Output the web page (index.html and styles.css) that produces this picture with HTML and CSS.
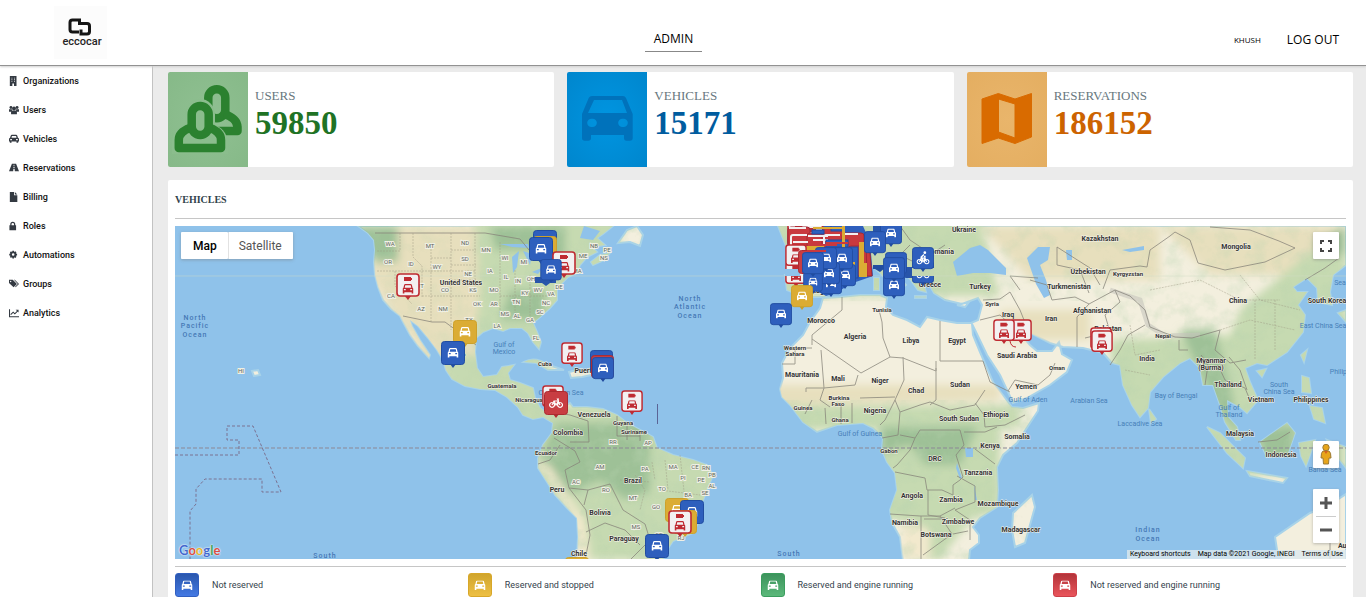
FILE: index.html
```html
<!DOCTYPE html>
<html lang="en">
<head>
<meta charset="utf-8">
<meta name="viewport" content="width=device-width, initial-scale=1">
<title>Eccocar Admin</title>
<link rel="stylesheet" href="styles.css">
</head>
<body>
<header class="topbar">
  <div class="brand">
    <svg class="brand-mark" viewBox="0 0 53 53" role="img" aria-label="eccocar">
      <path d="M25 26H18.500Q16 26 16 23.500V16.500Q16 14 18.500 14H25.500V17.500H33Q35.500 17.500 35.500 20V25.500Q35.500 28 33 28H27V23.500" fill="none" stroke="#151515" stroke-width="3"/>
      <text x="28" y="39" text-anchor="middle" class="brand-word">eccocar</text>
    </svg>
  </div>
  <a class="tab" href="#admin">ADMIN</a>
  <div class="account">
    <a class="user" href="#profile">KHUSH</a>
    <a class="logout" href="#logout">LOG OUT</a>
  </div>
</header>

<div class="shell">
<nav class="sidebar">
  <a href="#organizations"><svg viewBox="0 0 12 12"><path fill-rule="evenodd" d="M1 0H9V12H6V9H4V12H1ZM3 2V3H4V2ZM6 2V3H7V2ZM3 4V5H4V4ZM6 4V5H7V4ZM3 6V7H4V6ZM6 6V7H7V6Z"/></svg>Organizations</a>
  <a href="#users"><svg viewBox="0 0 12 12"><circle cx="2.3" cy="3" r="1.7"/><circle cx="9.7" cy="3" r="1.7"/><circle cx="6" cy="4.2" r="2.4"/><path d="M0 5H3.5V8H0ZM8.500 5H12V8H8.500ZM2.500 11Q2 6.500 4.500 6.500H7.500Q10 6.500 9.500 11Z"/></svg>Users</a>
  <a href="#vehicles"><svg viewBox="0 0 12 12"><path fill-rule="evenodd" d="M3.500 1H8.500Q9.500 1 10 2L10.700 4.500Q12 5 12 6V9H11V10.500H9V9H3V10.500H1V9H0V6Q0 5 1.300 4.500L2 2Q2.500 1 3.500 1ZM3.500 2.500L3 4.500H9L8.500 2.500ZM1.500 6V7.500H3.500V6ZM8.500 6V7.500H10.500V6Z"/></svg>Vehicles</a>
  <a href="#reservations"><svg viewBox="0 0 12 12"><path fill-rule="evenodd" d="M3.500 1H8.500L12 10H7L6.700 7H5.300L5 10H0ZM5.600 2L5.500 3.500H6.500L6.400 2ZM5.400 4.500L5.300 6H6.700L6.600 4.500Z"/></svg>Reservations</a>
  <a href="#billing"><svg viewBox="0 0 12 12"><path d="M1 0H6V4H10V12H1ZM7 0L10 3H7Z"/></svg>Billing</a>
  <a href="#roles"><svg viewBox="0 0 12 12"><path fill-rule="evenodd" d="M0.500 5H1.500V4Q1.500 1 4.500 1T7.500 4V5H8.500V11H0.500ZM3 5H6V4Q6 2.500 4.500 2.500T3 4Z"/></svg>Roles</a>
  <a href="#automations"><svg viewBox="0 0 12 12"><circle cx="5" cy="5.500" r="2.700" fill="none" stroke="#343a42" stroke-width="2.300"/><path d="M5 0.800V2.500M5 8.500V10.200M0.300 5.500H2M8 5.500H9.700M1.700 2.200L3 3.500M7 7.500L8.300 8.800M8.300 2.200L7 3.500M3 7.500L1.700 8.800" stroke="#343a42" stroke-width="2"/></svg>Automations</a>
  <a href="#groups"><svg viewBox="0 0 12 12"><path fill-rule="evenodd" d="M0 1H4.500L9.500 6L5.500 10L0 4.800ZM2 2.200A.8.8 0 1 0 2 3.800A.8.8 0 1 0 2 2.200ZM6 1H7L12 6L8 10L7.300 9.300L10.600 6Z"/></svg>Groups</a>
  <a href="#analytics"><svg viewBox="0 0 12 12"><path d="M.6 1.500V10.400H12M2 8L5 5L7 7L10.500 3.500" fill="none" stroke="#343a42" stroke-width="1.300"/><path d="M8 2H11.500V5.500Z"/></svg>Analytics</a>
</nav>

<main class="content">
  <section class="stats">
    <article class="stat users">
      <svg class="stat-icon" viewBox="0 0 80 95" aria-hidden="true">
        <g fill="none" stroke="#2b812f" stroke-width="8.500" stroke-linejoin="round">
          <rect x="40.300" y="17.300" width="17" height="29" rx="8.400"/>
          <path d="M49 59H69.500V55Q69 46 56 42"/>
        </g>
        <rect x="17" y="27" width="30" height="42" rx="15" fill="#8bbd8d"/>
        <path d="M4 82V69Q6 56 20 52H44Q58 56 59.500 69V82Z" fill="#8bbd8d"/>
        <g fill="none" stroke="#2b812f" stroke-width="8.500" stroke-linejoin="round">
          <path d="M22 56Q10.800 60 10.800 68V76H53V68Q53 60 42 56"/>
          <rect x="23.700" y="34" width="17" height="29" rx="8.400" fill="#8bbd8d"/>
        </g>
      </svg>
      <div class="stat-text"><h2>USERS</h2><strong>59850</strong></div>
    </article>
    <article class="stat vehicles">
      <svg class="stat-icon" viewBox="0 0 80 95" aria-hidden="true">
        <path fill="#0072bb" fill-rule="evenodd" d="M25 24H56Q58 24 59 26L65.700 42V66Q65.700 68.700 63 68.700H59.500Q57 68.700 57 66V63H24V66Q24 68.700 21.300 68.700H17.700Q15 68.700 15 66V42L21.700 26Q22.700 24 25 24ZM27 28L21 41H60L55 28ZM25 46.700A4.200 4.200 0 1 0 25 55A4.200 4.200 0 1 0 25 46.700ZM56 46.700A4.200 4.200 0 1 0 56 55A4.200 4.200 0 1 0 56 46.700Z"/>
      </svg>
      <div class="stat-text"><h2>VEHICLES</h2><strong>15171</strong></div>
    </article>
    <article class="stat reservations">
      <svg class="stat-icon" viewBox="0 0 80 95" aria-hidden="true">
        <path fill="#d96b00" fill-rule="evenodd" stroke="#d96b00" stroke-linejoin="round" d="M15 27L31.300 21.500L48 27L64.500 21.500V65L48 71.500L31.300 66L15 71.500ZM31.500 27V60L48 66V32Z"/>
      </svg>
      <div class="stat-text"><h2>RESERVATIONS</h2><strong>186152</strong></div>
    </article>
  </section>

  <section class="panel">
    <h1>VEHICLES</h1>
    <div class="map">
      <svg class="world" viewBox="175 226 1171 333" preserveAspectRatio="xMidYMid slice" role="img" aria-label="Vehicle map">
        <defs>
          <symbol id="car" viewBox="0 0 12 11"><path fill-rule="evenodd" d="M3 0H9Q10 0 10.300 1L11 4Q12 4.500 12 5.500V10.500H10V9H2V10.500H0V5.500Q0 4.500 1 4L1.700 1Q2 0 3 0ZM3 1.300L2.400 4H9.600L9 1.300ZM1.500 5.500V7H3.500V5.500ZM8.500 5.500V7H10.500V5.500Z"/></symbol>
          <symbol id="bike" viewBox="0 0 14 11"><path d="M3 5.500A2.400 2.400 0 1 0 3.100 5.500M11 5.500A2.400 2.400 0 1 0 11.100 5.500M3 8L5 4H9L11 8M5 4L7 8L9.500 4L8.500 2H10" fill="none" stroke="#fff" stroke-width="1.200"/></symbol>
          <symbol id="blue" viewBox="0 0 24 27"><path d="M9 23H15L12 27Z" fill="#214da1"/><rect x=".5" y=".5" width="23" height="23" rx="3" fill="#2e5fbd" stroke="#214da1"/><use href="#car" x="6.500" y="7" width="11" height="10" fill="#fff"/></symbol>
          <symbol id="yellow" viewBox="0 0 24 27"><path d="M9 23H15L12 27Z" fill="#c9a02b"/><rect x=".5" y=".5" width="23" height="23" rx="3" fill="#dbac34" stroke="#cda12b"/><use href="#car" x="6.500" y="7" width="11" height="10" fill="#fff"/></symbol>
          <symbol id="red" viewBox="0 0 24 27"><path d="M9 23H15L12 27Z" fill="#b12b30"/><rect x=".5" y=".5" width="23" height="23" rx="3" fill="#c83d42" stroke="#ac2b31"/><use href="#bike" x="5" y="6" width="14" height="11"/></symbol>
          <symbol id="cyclist" viewBox="0 0 24 27"><path d="M9 23H15L12 27Z" fill="#214da1"/><rect x=".5" y=".5" width="23" height="23" rx="3" fill="#2e5fbd" stroke="#214da1"/><use href="#bike" x="4" y="8" width="16" height="11"/><circle cx="14" cy="6" r="1.500" fill="#fff"/><path d="M13 8L10 11L12 14" fill="none" stroke="#fff" stroke-width="1.500"/></symbol>
          <symbol id="low" viewBox="0 0 24 27"><path d="M9 23H15L12 27Z" fill="#bf2b32"/><rect x="1" y="1" width="22" height="22" rx="3" fill="#f3f0f1" stroke="#bf2b32" stroke-width="1.600"/><path d="M8 4H15V5H16V7H15V8H8Z" fill="#bf2b32"/><use href="#car" x="6.500" y="11" width="11" height="10" fill="#bf2b32"/></symbol>
          <filter id="soft" x="-20%" y="-20%" width="140%" height="140%"><feGaussianBlur stdDeviation="4"/></filter>
          <filter id="terrain" x="0" y="0" width="100%" height="100%"><feTurbulence type="fractalNoise" baseFrequency=".06" numOctaves="4" seed="8"/><feColorMatrix values="0 0 0 0 .48  0 0 0 0 .65  0 0 0 0 .43  1.800 0 0 0 -.78"/></filter>
          <path id="land" d="M358 226L368 233L374 240L375 250L374 262L375 275L378 287L383 300L391 309L400 316L403 322L410 335L418 346L429 358L430 355L420 340L412 326L410 320L418 326L428 338L437 350L443 360L446 370L452 379L465 386L480 389L495 390L507 397L518 407L523 415L533 419L543 417L553 423L552 433L543 445L538 458L538 468L547 482L555 495L567 508L577 518L578 537L577 560H663L667 550L673 541L693 533L698 523L702 503L707 490L713 475L707 465L693 460L673 455L657 448L653 437L640 430L627 423L617 415L603 409L587 407L573 407L570 403L560 408L554 413L547 413L540 408L535 398L533 388L520 383L510 380L508 373L514 365L502 367L497 375L483 377L477 368L475 352L476 338L483 332L493 328L503 331L510 328L522 328L528 333L533 342L539 349L541 342L537 332L533 323L540 317L550 308L557 300L557 290L562 283L568 277L577 273L580 265L587 257L597 252L592 247L605 245L597 238L603 234L613 226Z
            M591 262L600 255L610 253L602 261L593 265ZM618 243L627 230L637 226L643 235L640 246L630 242ZM524 362Q535 356 549 365L564 370L548 370L536 363ZM569 372L581 369L596 374L582 377L571 378Z
            M778 226H1346V265L1333 275L1330 292L1332 305L1318 302L1317 288L1307 278L1293 287L1297 292L1307 292L1298 305L1305 315L1303 332L1287 352L1267 365L1257 363L1245 368L1250 382L1258 400L1247 413L1240 407L1227 400L1228 417L1237 427L1240 440L1236 440L1225 422L1220 405L1213 385L1203 385L1200 368L1190 358L1180 363L1163 377L1150 392L1148 408L1140 417L1132 405L1123 385L1120 365L1112 363L1103 353L1083 348L1063 347L1050 343L1032 334L1020 324L1018 331L1030 345L1037 351L1052 351L1059 342L1062 354L1072 360L1067 372L1050 385L1027 398L1013 403L1008 392L1000 375L987 355L975 330L972 324L973 335L980 352L987 368L993 382L1003 395L1012 407L1023 408L1039 403L1038 411L1030 423L1017 443L1003 455L997 467L998 490L997 507L980 518L973 527L979 535L979 543L970 550L969 560H903L900 537L892 523L890 510L897 490L895 473L887 462L882 450L883 438L873 428L863 423L837 425L817 432L803 422L790 405L782 397L780 389L783 378L782 363L790 348L803 335L810 322L820 308L823 298L840 297L860 295L880 295L887 298L886 307L893 315L907 320L920 327L927 317L940 320L957 323L971 323L978 320L982 305L978 298L962 304L945 300L934 293L930 286L924 285L926 292L918 290L910 279L895 264L888 261L899 278L906 285L898 291L892 285L880 273L873 267L860 271L846 280L835 289L825 297L804 297L787 290L785 275L812 274L805 251L786 246Z
            M1032 495L1035 507L1025 543L1015 547L1012 530L1013 513ZM1149 409L1156 419L1151 423ZM1207 427L1220 433L1245 458L1243 468L1227 453ZM1247 471L1287 478L1283 483L1250 476ZM1260 442L1287 423L1295 433L1288 453L1267 457ZM1302 376L1309 378L1311 393L1302 392ZM1310 406L1322 408L1325 423L1314 419ZM1301 355L1307 350L1304 362ZM1257 371L1266 369L1262 377ZM1338 313L1346 310V322ZM1299 443L1315 440L1310 455L1306 466L1301 456ZM1327 440L1346 447V468L1335 454ZM1283 560L1277 550L1275 537L1310 513L1326 507L1346 494V560Z
            M252 371L258 370L260 375L254 376ZM874 278H879V290H874ZM915 296H926V298H915ZM957 305L969 302L965 307Z"/>
          <clipPath id="landClip"><use href="#land"/></clipPath>
        </defs>
        <rect x="0" y="0" width="1600" height="800" fill="#8fc2ea"/>
        <use href="#land" fill="#f3efde" stroke="#a8d3e9" stroke-width="2"/>
        <g clip-path="url(#landClip)">
          <g filter="url(#soft)">
            <path fill="#e7dfbd" d="M375 226H490V380H440L370 280ZM775 385L1000 385V400L770 405ZM980 226H1160V280L1030 280ZM1000 310H1090V340H1000ZM1160 226H1346V275H1210Z"/>
            <path fill="#c6dab1" d="M475 220H620V350H474L480 290ZM440 355H550V430H460ZM535 405H720V560H585L560 500H535ZM780 405H1020V428H1000V510L970 520L940 560H910L900 520H880V430H790ZM775 220H980L1000 296H780ZM1110 340L1230 335L1240 310L1300 260L1346 230V475H1120Z"/>
            <path fill="#9ec197" d="M355 226H398V262H375ZM490 226H565V280L540 250H495ZM510 290H545V320H500ZM555 423H650V492L625 500L600 480L570 495L540 460ZM880 427L978 426L960 465L925 465L910 445L880 455ZM1180 330L1215 330L1230 385L1240 440L1210 395ZM1258 425H1295V460H1260ZM1310 245L1346 226V256Z"/>
            <path fill="#f2e9cd" d="M535 460L549 465L585 520L590 560H577L570 510ZM903 520L930 530V560H900Z"/>
          </g>
          <rect x="355" y="226" width="125" height="160" filter="url(#terrain)" opacity=".25"/>
          <rect x="480" y="226" width="295" height="333" filter="url(#terrain)" opacity=".55"/>
          <rect x="775" y="226" width="571" height="75" filter="url(#terrain)" opacity=".4"/>
          <rect x="775" y="400" width="300" height="160" filter="url(#terrain)" opacity=".5"/>
          <rect x="1110" y="301" width="236" height="190" filter="url(#terrain)" opacity=".5"/>
          <path d="M1110 290L1140 300L1148 325L1165 336L1200 335" stroke="#c7c4bd" stroke-width="5" fill="none" opacity=".6"/>
        </g>
        <g fill="#8fc2ea">
          <path d="M953 262L970 248L980 245L988 250L1006 268L1006 275L990 273L973 273L957 276ZM1027 258L1038 247L1050 247L1048 260L1040 265L1046 280L1050 295L1044 298L1036 284ZM512 257L519 251L517 267L513 273ZM500 244L528 244L529 248L512 247ZM523 251L532 254L530 265ZM550 262L561 258L556 264ZM532 272L544 267L538 274ZM965 448H973V457H966ZM957 463L962 478L960 479L956 468ZM974 484L977 500L975 500ZM1122 250L1144 246L1144 250L1130 252ZM1066 250H1072V260H1067ZM584 226L600 231L593 240L580 238Z"/>
        </g>
        <g class="borders">
          <path d="M375 233H485L520 239L529 250M403 316L432 322L445 322L460 333L476 345M552 412L570 415L588 421L589 442L570 442M554 438L575 451L580 462L565 470L569 488L588 490L610 484L623 510L645 524L650 540L630 560M538 464L550 460L560 445M569 488L586 510L590 535L585 560M588 490L584 505M586 532L605 523L625 530L640 545M617 416V436L640 436M627 425V440M640 431V441"/>
          <path d="M812 339L861 373L890 357L883 338L882 322L879 310M842 297V310L812 335V345M782 364H795V348H812M821 350L824 388H806V392M858 375L855 385L824 388L820 400L830 407M890 357L903 358L936 371V368M940 321V361H983M936 361V400L930 405M903 357L904 380L895 400L900 412L920 405L930 402L950 410L975 405L985 390M812 400L805 414M825 408L826 424M841 406V424M852 403V423M860 398L895 397M895 400L885 420L880 425M900 412L898 435L882 438M900 435L915 438L910 450L897 465L893 468M915 438L920 430L960 430L964 445L956 455L963 477L960 480L953 485V495L942 490H927L925 478L895 472M964 432H985L997 427M975 449L995 464M957 476L975 486L975 502L955 510L970 520V540M890 514L920 516H940L955 508M928 490V515L945 518M921 516V560M924 519H945M940 516L952 534L923 555M953 534L968 531M975 403L984 415L985 427L1005 425L1025 415M983 361L990 382L1010 392"/>
          <path d="M983 300L1000 299L1010 292L1020 310L1030 335M980 320L1000 315L1018 332M1008 391L1015 380L1038 385M1038 385L1050 375L1055 363M1030 280L1047 285L1052 300L1075 297L1089 304L1077 317V347M1089 304L1115 290L1120 302L1105 315L1110 332L1085 338M1057 265V247L1090 268L1100 285M1057 265L1080 270L1089 293M1103 289L1110 270L1140 266L1147 267L1150 250L1170 236L1175 232L1190 240L1198 263L1225 270L1265 262L1295 248L1279 241L1250 230L1210 227M1115 290L1130 296L1145 310L1150 327L1175 337L1192 338L1220 330L1215 350L1230 363L1246 360M1179 340V350L1188 350M1205 385L1208 365L1201 355M1218 365L1225 380L1245 388L1250 400M1229 357L1240 370L1247 390M1110 365L1120 350L1128 335L1145 325M1258 442L1277 440L1290 432M1305 280L1325 268L1339 258M900 226L910 240L925 250M910 245L900 255L920 265M930 255L945 245M1020 290L1010 276L1038 278M1330 520V560"/>
        </g>
        <g class="state-borders"><path d="M400 233V251H376M413 233V257L422 266V297M377 271H475M395 271V286L412 304M431 246V272M431 258H451M431 272V323M451 233V330M422 296H480M475 233V290M500 242V315M451 250H476M451 265H476M451 280H476M515 270V320M530 275V318M500 296H548M635 475L645 490L640 510M652 462L655 480M665 460L668 490M680 455L685 500M620 480L650 482M660 490L700 495M1130 325L1135 355L1160 350M1125 370L1150 375M1150 290L1200 280L1240 300L1280 300M1240 275L1260 300L1300 310M1220 330L1250 320L1295 330M1255 300V360M1275 300V350"/></g>
        <path d="M175 276H1346" stroke="#d0dcc5" opacity=".45"/>
        <path d="M175 448H1346" stroke="#8c8795" stroke-dasharray="4 2"/>
        <path d="M175 455H239V440H227V426H253L281 492H262V479H205L196 489V504L190 511V560" fill="none" stroke="#7b7292" stroke-dasharray="3 2"/>
        <path d="M657.500 404V424" stroke="#5b6496"/>
        <g class="ocean">
          <text x="195" y="320">North</text><text x="195" y="328">Pacific</text><text x="195" y="337">Ocean</text>
          <text x="690" y="301">North</text><text x="690" y="309">Atlantic</text><text x="690" y="318">Ocean</text>
          <text x="325" y="558">South</text><text x="789" y="556">South</text>
          <text x="1148" y="532">Indian</text><text x="1148" y="541">Ocean</text>
        </g>
        <g class="sea">
          <text x="504" y="347">Gulf of</text><text x="504" y="354">Mexico</text><text x="561" y="395">Caribbean Sea</text><text x="860" y="436">Gulf of Guinea</text><text x="1028" y="402">Gulf of Aden</text><text x="1089" y="403">Arabian Sea</text><text x="1176" y="398">Bay of Bengal</text><text x="1140" y="426">Laccadive Sea</text><text x="1279" y="387">South</text><text x="1279" y="394">China Sea</text><text x="1229" y="410">Gulf of</text><text x="1229" y="417">Thailand</text><text x="1323" y="328">East China Sea</text><text x="1325" y="472">Banda Sea</text><text x="1340" y="285">Sea</text><text x="1345" y="374">Philippine</text>
        </g>
        <g class="state">
          <text x="390" y="246">WA</text><text x="430" y="248">MT</text><text x="465" y="245">ND</text><text x="388" y="264">OR</text><text x="411" y="266">ID</text><text x="437" y="269">WY</text><text x="465" y="261">SD</text><text x="468" y="276">NE</text><text x="420" y="288">UT</text><text x="391" y="298">CA</text><text x="445" y="292">CO</text><text x="473" y="292">KS</text><text x="421" y="311">AZ</text><text x="443" y="311">NM</text><text x="469" y="322">TX</text><text x="486" y="252">MN</text><text x="505" y="260">WI</text><text x="524" y="264">MI</text><text x="490" y="273">IA</text><text x="506" y="279">IL</text><text x="518" y="283">IN</text><text x="531" y="281">OH</text><text x="494" y="292">MO</text><text x="525" y="295">KY</text><text x="538" y="292">WV</text><text x="559" y="289">DE</text><text x="551" y="296">VA</text><text x="477" y="306">OK</text><text x="494" y="306">AR</text><text x="516" y="304">TN</text><text x="546" y="305">NC</text><text x="505" y="316">MS</text><text x="517" y="318">AL</text><text x="540" y="314">SC</text><text x="530" y="322">GA</text><text x="497" y="328">LA</text><text x="536" y="340">FL</text><text x="583" y="258">ME</text><text x="594" y="248">NB</text><text x="607" y="252">PE</text><text x="604" y="260">NS</text><text x="577" y="273">MA</text><text x="241" y="373">HI</text>
          <text x="613" y="444">RR</text><text x="648" y="445">AP</text><text x="600" y="469">AM</text><text x="645" y="471">PA</text><text x="673" y="469">MA</text><text x="695" y="469">CE</text><text x="706" y="470">RN</text><text x="683" y="480">PI</text><text x="701" y="482">PE</text><text x="712" y="477">PB</text><text x="712" y="488">AL</text><text x="705" y="495">SE</text><text x="576" y="484">AC</text><text x="606" y="492">RO</text><text x="662" y="491">TO</text><text x="633" y="500">MT</text><text x="688" y="497">BA</text><text x="656" y="509">GO</text><text x="636" y="529">MS</text><text x="659" y="537">SP</text><text x="681" y="540">RJ</text>
        </g>
        <g class="country">
          <text x="461" y="285">United States</text><text x="454" y="357">Mexico</text><text x="593" y="373">Puerto Rico</text><text x="594" y="417">Venezuela</text><text x="568" y="435">Colombia</text><text x="633" y="483">Brazil</text><text x="557" y="492">Peru</text><text x="600" y="515">Bolivia</text><text x="624" y="541">Paraguay</text><text x="579" y="556">Chile</text>
          <text x="964" y="232">Ukraine</text><text x="940" y="254">Romania</text><text x="930" y="287">Greece</text><text x="816" y="293">Portugal</text><text x="980" y="289">Turkey</text><text x="821" y="323">Morocco</text><text x="855" y="339">Algeria</text><text x="911" y="343">Libya</text><text x="957" y="343">Egypt</text><text x="1008" y="317">Iraq</text><text x="1017" y="358">Saudi Arabia</text><text x="802" y="377">Mauritania</text><text x="838" y="381">Mali</text><text x="880" y="383">Niger</text><text x="916" y="393">Chad</text><text x="960" y="387">Sudan</text><text x="1026" y="389">Yemen</text><text x="875" y="413">Nigeria</text><text x="959" y="421">South Sudan</text><text x="996" y="417">Ethiopia</text><text x="1017" y="439">Somalia</text><text x="990" y="448">Kenya</text><text x="935" y="461">DRC</text><text x="978" y="475">Tanzania</text><text x="912" y="498">Angola</text><text x="951" y="502">Zambia</text><text x="998" y="506">Mozambique</text><text x="958" y="524">Zimbabwe</text><text x="905" y="525">Namibia</text><text x="936" y="537">Botswana</text><text x="1021" y="532">Madagascar</text>
          <text x="1100" y="241">Kazakhstan</text><text x="1236" y="249">Mongolia</text><text x="1088" y="274">Uzbekistan</text><text x="1069" y="289">Turkmenistan</text><text x="1092" y="313">Afghanistan</text><text x="1051" y="321">Iran</text><text x="1108" y="331">Pakistan</text><text x="1147" y="361">India</text><text x="1238" y="303">China</text><text x="1327" y="303">South Korea</text><text x="1211" y="363">Myanmar</text><text x="1211" y="370">(Burma)</text><text x="1228" y="387">Thailand</text><text x="1261" y="402">Vietnam</text><text x="1311" y="402">Philippines</text><text x="1240" y="436">Malaysia</text><text x="1281" y="457">Indonesia</text><text x="1352" y="548">Australia</text>
        </g>
        <g class="country small">
          <text x="545" y="366">Cuba</text><text x="502" y="388">Guatemala</text><text x="529" y="402">Nicaragua</text><text x="623" y="425">Guyana</text><text x="634" y="434">Suriname</text><text x="546" y="455">Ecuador</text><text x="882" y="312">Tunisia</text><text x="992" y="306">Syria</text><text x="795" y="350">Western</text><text x="795" y="356">Sahara</text><text x="839" y="400">Burkina</text><text x="838" y="406">Faso</text><text x="803" y="410">Guinea</text><text x="840" y="422">Ghana</text><text x="889" y="453">Gabon</text><text x="1128" y="276">Kyrgyzstan</text><text x="1057" y="370">Oman</text><text x="1163" y="338">Nepal</text>
        </g>
        <g class="pins">
          <use href="#low" x="396" y="273" width="24" height="27"/>
          <use href="#yellow" x="453" y="320" width="24" height="27"/><use href="#blue" x="441" y="341" width="24" height="27"/>
          <use href="#blue" x="533" y="230" width="24" height="27"/><use href="#yellow" x="533" y="236" width="24" height="27"/><use href="#blue" x="529" y="237" width="24" height="27"/>
          <use href="#low" x="552" y="251" width="24" height="27"/><path d="M535 277H556V283H550L546 286L542 283H535Z" fill="#2855aa"/><use href="#blue" x="539" y="259" width="24" height="24"/>
          <use href="#low" x="561" y="342" width="22" height="25"/><use href="#blue" x="590" y="350" width="23" height="26"/><use href="#red" x="591" y="355" width="23" height="26"/><use href="#blue" x="592" y="357" width="22" height="25"/>
          <use href="#low" x="542" y="385" width="22" height="25"/><use href="#red" x="544" y="391" width="24" height="27"/><use href="#low" x="621" y="390" width="22" height="25"/>
          <use href="#yellow" x="665" y="498" width="24" height="27"/><use href="#blue" x="680" y="500" width="24" height="27"/><use href="#yellow" x="673" y="510" width="24" height="27"/><use href="#low" x="668" y="510" width="24" height="27"/><use href="#blue" x="645" y="534" width="24" height="27"/><use href="#yellow" x="565" y="557" width="24" height="27"/>

          <path d="M788 226H863L870 242L873 276L850 284L838 292L826 296L812 288L795 276V250H787Z" fill="#2e5fbd"/>
          <use href="#low" x="787" y="222" width="24" height="27"/><use href="#low" x="800" y="224" width="24" height="27"/>
          <g fill="#c9393e" stroke="#a32a35"><rect x="788" y="227" width="22" height="20" rx="3"/><rect x="807" y="233" width="20" height="22" rx="3"/><rect x="822" y="228" width="22" height="23" rx="3"/><rect x="842" y="233" width="22" height="23" rx="3"/><rect x="848" y="246" width="21" height="30" rx="3"/><path d="M866 242H869L872 276H867Z"/></g>
          <g fill="none" stroke="#f3f0f1" stroke-width="2"><path d="M791 246V237Q791 235 793 235H807M793 242H808M824 246V237Q824 235 826 235H840M843 243V234H858M789 228H806M813 240H828M808 236H828"/></g>
          <g fill="#2e5fbd" stroke="#214da1"><rect x="812" y="230" width="12" height="4"/><rect x="831" y="225" width="12" height="6"/><rect x="850" y="247" width="8" height="31"/><rect x="826" y="240" width="22" height="7"/></g>
          <g fill="#dbac34"><rect x="842" y="226" width="3" height="35"/><rect x="859" y="242" width="5" height="35"/><rect x="806" y="246" width="18" height="9"/><rect x="813" y="227" width="30" height="2"/><rect x="864" y="263" width="3" height="14"/><rect x="852" y="262" width="3" height="15"/></g>
          <use href="#low" x="785" y="262" width="22" height="25"/><path d="M785 269H800V276H785Z" fill="#8fc2ea"/>
          <use href="#low" x="785" y="244" width="22" height="25"/>
          <use href="#red" x="798" y="250" width="24" height="27"/>
          <use href="#blue" x="834" y="264" width="22" height="25"/><use href="#blue" x="831" y="247" width="22" height="25"/>
          <use href="#blue" x="820" y="272" width="22" height="25"/><use href="#blue" x="818" y="262" width="22" height="25"/><use href="#blue" x="815" y="247" width="22" height="25"/>
          <use href="#blue" x="802" y="272" width="22" height="22"/><use href="#blue" x="802" y="252" width="22" height="25"/>
          <path d="M807 251H826M820 245H837M826 243H848" stroke="#c9393e" stroke-width="2"/>
          <use href="#yellow" x="791" y="285" width="22" height="25"/><use href="#blue" x="770" y="303" width="22" height="25"/>
          <path d="M873 265H885V268L880 272L875 269H873Z" fill="#214da1"/>
          <path d="M873 226H887V232H873Z" fill="#2855aa"/><use href="#blue" x="880" y="222" width="22" height="25"/><use href="#blue" x="864" y="231" width="22" height="25"/>
          <rect x="904" y="267" width="10" height="11" rx="2" fill="#2855aa"/><use href="#blue" x="885" y="252" width="22" height="25"/><use href="#blue" x="883" y="274" width="22" height="25"/><use href="#blue" x="883" y="257" width="22" height="25"/>
          <use href="#cyclist" x="912" y="261" width="22" height="25"/><path d="M912 268H934V276H912Z" fill="#c3d6b2"/><use href="#cyclist" x="912" y="247" width="22" height="25"/>
          <use href="#low" x="1010" y="319" width="22" height="25"/><use href="#low" x="993" y="319" width="22" height="25"/><path d="M1010 341Q1011 347 1016 347" fill="none" stroke="#bf2b32"/>
          <use href="#low" x="1090" y="327" width="22" height="25"/><use href="#low" x="1091" y="330" width="22" height="25"/>
        </g>
      </svg>
      <div class="map-types"><button type="button" class="active">Map</button><button type="button">Satellite</button></div>
      <button type="button" class="control fullscreen" aria-label="Toggle fullscreen"><svg viewBox="0 0 12 12"><path d="M1 4V1H4M8 1H11V4M11 8V11H8M4 11H1V8" fill="none" stroke="#444" stroke-width="2"/></svg></button>
      <div class="map-tools">
        <button type="button" class="control" aria-label="Street View"><svg class="pegman" viewBox="0 0 12 21"><circle cx="6" cy="3.500" r="3.200"/><path d="M3 7H9Q11 8 11 14L9 14L8.500 20H3.500L3 14L1 14Q1 8 3 7Z"/><path d="M4 7L6 10L8 7Z" class="scarf"/></svg></button>
        <div class="zoom">
          <button type="button" aria-label="Zoom in"><svg viewBox="0 0 12 12"><path d="M0 6H12M6 0V12" stroke="#555" stroke-width="3"/></svg></button>
          <button type="button" aria-label="Zoom out"><svg viewBox="0 0 12 12"><path d="M0 6H12" stroke="#555" stroke-width="3"/></svg></button>
        </div>
      </div>
      <div class="google" aria-label="Google"><span class="g-blue">G</span><span class="g-red">o</span><span class="g-yellow">o</span><span class="g-blue">g</span><span class="g-green">l</span><span class="g-red">e</span></div>
      <div class="credits"><a href="#shortcuts">Keyboard shortcuts</a><span>Map data ©2021 Google, INEGI</span><a href="#terms">Terms of Use</a></div>
    </div>
    <ul class="legend">
      <li><svg class="key blue" viewBox="0 0 24 24"><use href="#car" x="6" y="7" width="12" height="11"/></svg>Not reserved</li>
      <li><svg class="key yellow" viewBox="0 0 24 24"><use href="#car" x="6" y="7" width="12" height="11"/></svg>Reserved and stopped</li>
      <li><svg class="key green" viewBox="0 0 24 24"><use href="#car" x="6" y="7" width="12" height="11"/></svg>Reserved and engine running</li>
      <li><svg class="key red" viewBox="0 0 24 24"><use href="#car" x="6" y="7" width="12" height="11"/></svg>Not reserved and engine running</li>
    </ul>
  </section>
</main>
</div>
</body>
</html>
```
FILE: styles.css
```css
* { box-sizing: border-box; }
body { margin: 0; min-height: 100vh; display: flex; flex-direction: column; background: #fff; color: #111; font-family: Roboto, sans-serif; }
a { color: inherit; text-decoration: none; }
button { border: 0; padding: 0; background: #fff; font-family: Roboto, sans-serif; cursor: pointer; }

.topbar { display: grid; grid-template-columns: 1fr auto 1fr; align-items: center; min-height: 66px; border-bottom: 1px solid #929292; box-shadow: 0 1px 2px #d0d0d0; position: relative; z-index: 1; font-family: "Open Sans", sans-serif; }
.brand { padding-left: 54px; }
.brand-mark { display: block; width: 53px; height: 53px; background: #fcfcfc; }
.brand-word { font: 500 11px Roboto, sans-serif; fill: #252525; }
.tab { padding: 7px 9px 4px; margin-top: 10px; border-bottom: 1px solid #888; font-size: 12px; line-height: 16px; margin-left: -19px; color: #000; }
.account { display: flex; justify-content: flex-end; align-items: center; gap: 26px; margin-top: 14px; padding-right: 27px; color: #000; }
.user { font-size: 8px; }
.logout { font-size: 12px; }

.shell { flex: 1; display: flex; }
.sidebar { flex: 0 0 153px; display: flex; flex-direction: column; border-right: 1px solid #c2c2c2; }
.sidebar a { display: flex; align-items: center; gap: 4px; height: 29px; padding-left: 9px; font-size: 9px; font-weight: 500; }
.sidebar svg { width: 10px; height: 10px; fill: #343a42; }

.content { flex: 1; min-width: 0; padding: 6px 13px 0 15px; background: #ebebeb; }
.stats { display: grid; grid-template-columns: repeat(3, 1fr); gap: 13px; }
.stat { display: flex; min-height: 95px; background: #fff; border-radius: 2px; overflow: hidden; }
.stat-icon { flex: 0 0 80px; width: 80px; height: 95px; }
.users .stat-icon { background: radial-gradient(#90c092, #86b988); }
.vehicles .stat-icon { background: radial-gradient(#0095e1, #0086cd); }
.reservations .stat-icon { background: radial-gradient(#e9b56b, #e4ae61); }
.stat-text { padding: 16px 7px; font-family: "Liberation Serif", serif; }
.stat h2 { margin: 0; font-size: 13px; line-height: 16px; font-weight: 400; color: #68777e; }
.stat strong { display: block; font-size: 33px; line-height: 38px; }
.users strong { color: #1f7325; }
.vehicles strong { color: #005c9f; }
.reservations strong { color: #cc6300; }

.panel { margin-top: 13px; padding: 0 7px; background: #fff; border-radius: 2px 2px 0 0; }
.panel h1 { margin: 0 0 7px; padding-top: 2px; border-bottom: 1px solid #c6c6c6; font: bold 10px/36px "Liberation Serif", serif; color: #31434c; }
.map { position: relative; height: 333px; overflow: hidden; background: #8fc2ea; }
.world { display: block; width: 100%; height: 100%; }
.world text { text-anchor: middle; font-family: Roboto, sans-serif; paint-order: stroke; }
.country text { font-size: 7px; font-weight: 700; fill: #333; stroke: #f6f3e9; stroke-width: 1px; }
.small text { font-size: 6px; }
.state text { font-size: 6px; fill: #5f665e; stroke: #eff0e4; stroke-width: 2px; }
.sea text { font-size: 7px; fill: #477fb8; }
.ocean text { font-size: 7px; font-weight: 500; letter-spacing: 1px; fill: #4578b5; }
.borders { fill: none; stroke: #858278; stroke-width: 1px; opacity: .75; }
.state-borders { fill: none; stroke: #9d9983; stroke-width: 1px; stroke-dasharray: 2 1; opacity: .45; }

.map-types { position: absolute; top: 6px; left: 6px; display: flex; box-shadow: 0 1px 3px #7777; }
.map-types button { height: 27px; padding: 0 11px 0 10px; border-radius: 1px; font-size: 12px; color: #555; }
.map-types button + button { border-left: 1px solid #e2e2e2; }
.map-types .active { font-weight: 500; padding: 0 11px 0 12px; color: #000; }
.control { display: grid; place-items: center; width: 26px; height: 27px; border-radius: 1px; box-shadow: 0 1px 3px #7777; }
.control svg { width: 12px; height: 12px; }
.fullscreen { position: absolute; top: 6px; right: 7px; }
.map-tools { position: absolute; right: 7px; bottom: 16px; display: grid; gap: 21px; }
.control .pegman { width: 12px; height: 21px; fill: #e7a51b; stroke: #9b7b37; stroke-width: 1px; }
.pegman .scarf { fill: #d26022; stroke: none; }
.zoom { width: 26px; padding: 0 3px; background: #fff; border-radius: 1px; box-shadow: 0 1px 3px #7777; }
.zoom button { display: grid; place-items: center; width: 20px; height: 27px; }
.zoom button + button { border-top: 1px solid #ccc; }
.zoom svg { width: 12px; height: 12px; }
.google { position: absolute; left: 4px; bottom: 1px; font: 700 13px/15px Lato, sans-serif; text-shadow: 0 0 2px #fff, 0 0 1px #fff; }
.g-blue { color: #4269ce; }
.g-red { color: #d94d43; }
.g-yellow { color: #e5b72c; }
.g-green { color: #3d9f58; }
.credits { position: absolute; right: 0; bottom: 0; display: flex; gap: 7px; padding: 0 3px; background: #dce8edcc; font-size: 7px; line-height: 9px; color: #000; }

.legend { display: grid; grid-template-columns: repeat(4, 1fr); margin: 7px 0 0; padding: 6px 0 0; border-top: 1px solid #c6c6c6; list-style: none; font-size: 9px; color: #34424c; }
.legend li { display: flex; align-items: center; gap: 13px; line-height: 24px; }
.key { width: 24px; height: 24px; flex-shrink: 0; border-radius: 3px; fill: #fff; }
.key.blue { background: linear-gradient(#2a57ad, #4379e3); border: 1px solid #315fc0; }
.key.yellow { background: linear-gradient(#d0a52d, #edbf43); border: 1px solid #d8a729; }
.key.green { background: linear-gradient(#3d935c, #5bb87a); border: 1px solid #3b9d5e; }
.key.red { background: linear-gradient(#b2343a, #e9555b); border: 1px solid #cc3f48; }
```
